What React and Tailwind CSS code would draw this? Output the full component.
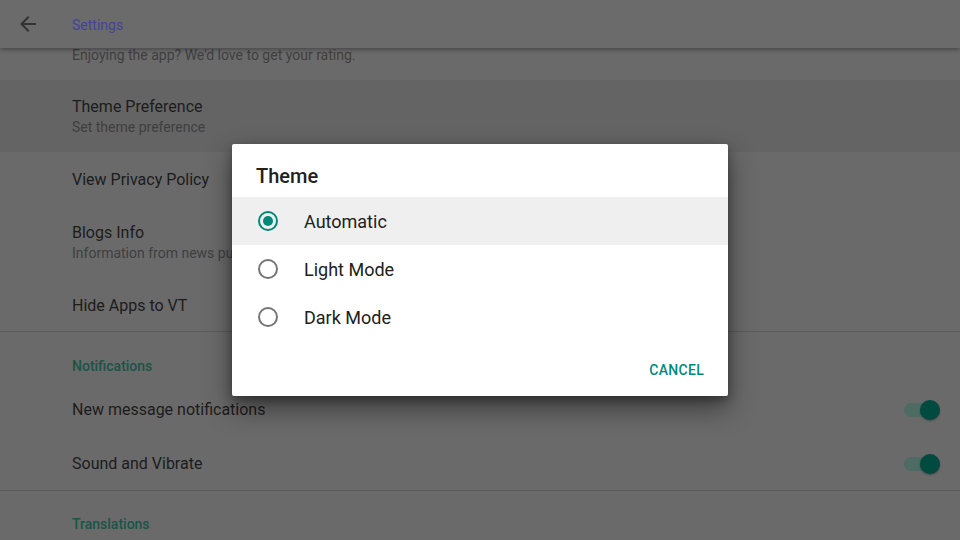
import React, { useState } from 'react';

const font = { fontFamily: 'Roboto, "Noto Sans", sans-serif' };

const Toggle = () => (
    <div className="relative w-[36px] h-[20px] flex items-center">
        <div className="w-[34px] h-[14px] rounded-full bg-[#4d6b63]" />
        <div className="absolute right-0 top-0 w-[20px] h-[20px] rounded-full bg-[#004a3f] shadow-[0_1px_2px_rgba(0,0,0,0.35)]" />
    </div>
);

const Radio = ({ checked }) => (
    <div className={`w-[20px] h-[20px] rounded-full border-2 flex items-center justify-center ${checked ? 'border-[#00897b]' : 'border-[#757575]'}`}>
        {checked && <div className="w-[10px] h-[10px] rounded-full bg-[#00897b]" />}
    </div>
);

const App = () => {
    const [theme, setTheme] = useState('Automatic');
    const options = ['Automatic', 'Light Mode', 'Dark Mode'];

    return (
        <div className="relative w-[960px] h-[540px] overflow-hidden bg-[#6a6a6a]" style={font}>
            {/* Top bar */}
            <div className="relative z-10 h-12 flex items-center bg-[#6b6b6b] shadow-[0_2px_4px_rgba(0,0,0,0.3)]">
                <div className="w-[72px] flex items-center pl-4">
                    <svg width="24" height="24" viewBox="0 0 24 24" fill="#333333">
                        <path d="M20 11H7.83l5.59-5.59L12 4l-8 8 8 8 1.41-1.41L7.83 13H20v-2z" />
                    </svg>
                </div>
                <span className="text-[14px] pt-[2px] text-[#42449a]">Settings</span>
            </div>

            {/* Settings list */}
            <div className="flex flex-col">
                <div className="h-8 pl-[72px]">
                    <p className="text-[14px] leading-[14px] text-[#3f3f3f]">Enjoying the app? We'd love to get your rating.</p>
                </div>

                <div className="h-[72px] pl-[72px] pt-[17px] bg-[#646464]">
                    <p className="text-[16px] leading-5 text-[#1c1c1c]">Theme Preference</p>
                    <p className="text-[14px] leading-[18px] mt-px text-[#3f3f3f]">Set theme preference</p>
                </div>

                <div className="h-[54px] pl-[72px] pt-[2px] flex items-center">
                    <p className="text-[16px] text-[#1c1c1c]">View Privacy Policy</p>
                </div>

                <div className="h-[72px] pl-[72px] pt-[17px]">
                    <p className="text-[16px] leading-5 text-[#1c1c1c]">Blogs Info</p>
                    <p className="text-[14px] leading-[18px] mt-px text-[#3f3f3f]">Information from news publishers</p>
                </div>

                <div className="h-[54px] pl-[72px] pt-[2px] flex items-center border-b border-[#5c5c5c]">
                    <p className="text-[16px] text-[#1c1c1c]">Hide Apps to VT</p>
                </div>

                <div className="h-[50px] pl-[72px] pt-[26px]">
                    <p className="text-[14px] leading-4 font-medium text-[#1b5446]">Notifications</p>
                </div>

                <div className="h-[54px] pl-[72px] pr-5 pt-[2px] flex items-center justify-between">
                    <p className="text-[16px] text-[#1c1c1c]">New message notifications</p>
                    <Toggle />
                </div>

                <div className="h-[55px] pl-[72px] pr-5 pt-[2px] flex items-center justify-between border-b border-[#5c5c5c]">
                    <p className="text-[16px] text-[#1c1c1c]">Sound and Vibrate</p>
                    <Toggle />
                </div>

                <div className="h-[50px] pl-[72px] pt-[25px]">
                    <p className="text-[14px] leading-4 font-medium text-[#1b5446]">Translations</p>
                </div>
            </div>

            {/* Theme dialog */}
            <div className="absolute left-[232px] top-[144px] w-[496px] h-[252px] bg-white rounded-[2px] shadow-[0_12px_28px_rgba(0,0,0,0.45),0_4px_10px_rgba(0,0,0,0.3)] flex flex-col">
                <div className="h-[53px] pl-6 pt-[21px]">
                    <p className="text-[20px] leading-[22px] font-medium text-[#212121]">Theme</p>
                </div>
                {options.map((opt) => (
                    <div
                        key={opt}
                        onClick={() => setTheme(opt)}
                        className={`h-12 flex items-center pl-[26px] ${theme === opt ? 'bg-[#efefef]' : ''}`}
                    >
                        <Radio checked={theme === opt} />
                        <span className="ml-[26px] text-[18px] text-[#212121]">{opt}</span>
                    </div>
                ))}
                <div className="flex-1 flex items-center justify-end pr-6 pt-1">
                    <button className="text-[14px] font-medium tracking-[0.3px] text-[#00897b]">CANCEL</button>
                </div>
            </div>
        </div>
    );
};

export default App;
